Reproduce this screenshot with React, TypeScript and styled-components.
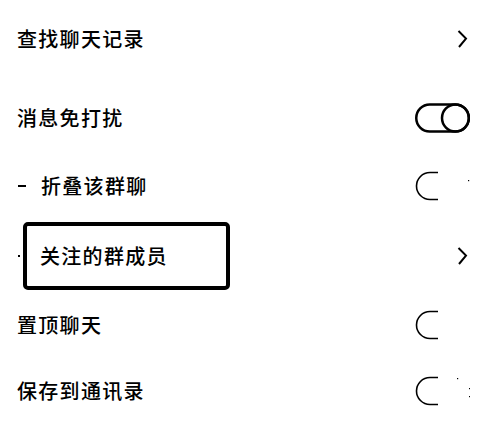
import React from "react";
import styled, { createGlobalStyle } from "styled-components";

const Global = createGlobalStyle`
  html, body { margin: 0; padding: 0; background: #fff; }
  body { font-family: "Noto Sans CJK SC", "Noto Sans", sans-serif; color: #000; }
`;

const List = styled.div`
  width: 490px;
  display: flex;
  flex-direction: column;
`;

const Row = styled.div<{ $h: number }>`
  height: ${(p) => p.$h}px;
  display: flex;
  align-items: center;
  justify-content: space-between;
  padding: 0 20px 0 17px;
`;

const Left = styled.div`
  display: flex;
  align-items: center;
`;

const Label = styled.span`
  font-size: 20px;
  font-weight: 500;
  letter-spacing: 1.3px;
  line-height: 1;
  white-space: nowrap;
`;

const Dash = styled.span<{ $w: number }>`
  display: inline-block;
  width: ${(p) => p.$w}px;
  height: 1.3px;
  background: #000;
  margin: 0 ${(p) => (p.$w > 4 ? 15 : 3)}px 0 1px;
`;

const Highlight = styled.div`
  box-sizing: border-box;
  width: 207px;
  height: 68px;
  border: 4px solid #000;
  border-radius: 5px;
  display: flex;
  align-items: center;
  padding-left: 13px;
`;

const Control = styled.div`
  width: 55px;
  height: 30px;
  display: flex;
  align-items: center;
  justify-content: flex-end;
`;

const ChevronWrap = styled.div`
  padding-right: 2px;
  display: flex;
`;

const Chevron = () => (
  <ChevronWrap>
    <svg width="11" height="18" viewBox="0 0 11 18">
      <polyline points="1.5,1 9,8.6 2,17" fill="none" stroke="#000" strokeWidth="2" />
    </svg>
  </ChevronWrap>
);

const ToggleOn = () => (
  <svg width="55" height="30" viewBox="0 0 55 30">
    <rect x="1.25" y="1.5" width="52.5" height="27" rx="13.5" fill="none" stroke="#000" strokeWidth="2.5" />
    <circle cx="40.5" cy="15" r="13.5" fill="none" stroke="#000" strokeWidth="2.5" />
  </svg>
);

type Dot = [number, number];

const ToggleOff = ({ dots = [] }: { dots?: Dot[] }) => (
  <svg width="55" height="30" viewBox="0 0 55 30">
    <path d="M23 1.5 H15 A13.5 13.5 0 0 0 15 28.5 H23" fill="none" stroke="#000" strokeWidth="1.6" />
    {dots.map(([x, y], i) => (
      <rect key={i} x={x} y={y} width="1.2" height="1.2" fill="#000" />
    ))}
  </svg>
);

export default function App() {
  return (
    <>
      <Global />
      <List>
        <Row $h={78}>
          <Label>查找聊天记录</Label>
          <Control><Chevron /></Control>
        </Row>
        <Row $h={80}>
          <Label>消息免打扰</Label>
          <Control><ToggleOn /></Control>
        </Row>
        <Row $h={56}>
          <Left>
            <Dash $w={8} />
            <Label>折叠该群聊</Label>
          </Left>
          <Control><ToggleOff dots={[[53, 9]]} /></Control>
        </Row>
        <Row $h={84}>
          <Left>
            <Dash $w={2} />
            <Highlight>
              <Label>关注的群成员</Label>
            </Highlight>
          </Left>
          <Control><Chevron /></Control>
        </Row>
        <Row $h={54}>
          <Label>置顶聊天</Label>
          <Control><ToggleOff /></Control>
        </Row>
        <Row $h={78}>
          <Label>保存到通讯录</Label>
          <Control><ToggleOff dots={[[42, 2], [54, 12], [54, 20]]} /></Control>
        </Row>
      </List>
    </>
  );
}
